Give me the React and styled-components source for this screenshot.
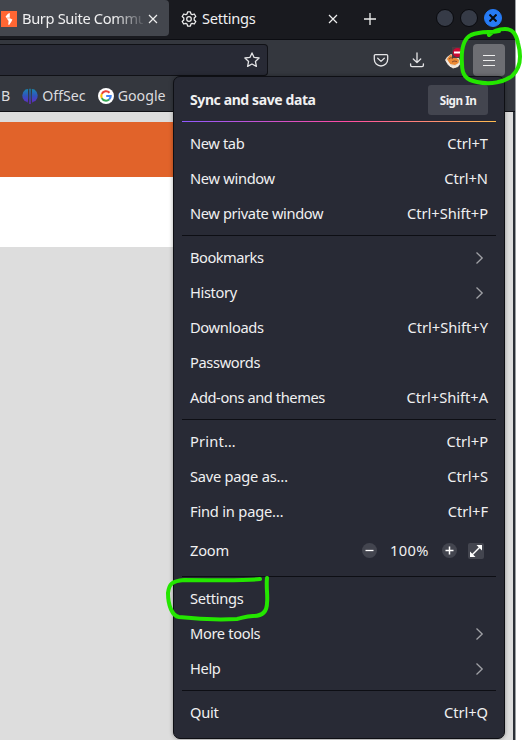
import React from "react";
import styled, { createGlobalStyle } from "styled-components";

const GlobalStyle = createGlobalStyle`
  * { box-sizing: border-box; }
  body { margin: 0; background: #fff; overflow: hidden; }
`;

const Screen = styled.div`
  position: relative;
  width: 525px;
  height: 740px;
  overflow: hidden;
  background: #fff;
  font: 14.2px/20px "Noto Sans", sans-serif;
  color: #f0f0f1;
`;
const Window = styled.div`
  width: 516px;
  height: 740px;
  display: flex;
  flex-direction: column;
  background: #ddd;
  border-right: 1px solid #9b9fa2;
  box-shadow: inset -2px 0 #2b3037;
`;
const TabStrip = styled.div`
  height: 40px;
  flex: none;
  display: flex;
  align-items: flex-start;
  background: #191a1f;
  border-bottom: 1px solid #0c0d12;
`;
const Tab = styled.div`
  height: 36px;
  width: ${(p) => p.$width}px;
  padding: 1px ${(p) => p.$right}px 0 ${(p) => p.$left}px;
  display: flex;
  align-items: center;
  gap: ${(p) => p.$gap}px;
  border-radius: 0 4px 4px 0;
  background: ${(p) => (p.$active ? "#43464d" : "transparent")};
  svg { flex: none; }
`;
const TabTitle = styled.span`
  flex: 1;
  min-width: 0;
  padding-bottom: 2px;
  white-space: nowrap;
  font-size: 14.67px;
  letter-spacing: ${(p) => p.$spacing || 0}px;
  mask-image: ${(p) => (p.$fade ? "linear-gradient(90deg, #000 76%, transparent 103%)" : "none")};
`;
const NewTab = styled.div`
  width: 62px;
  height: 37px;
  margin-left: 16px;
  display: flex;
  align-items: center;
`;
const WindowControls = styled.div`
  height: 36px;
  display: flex;
  align-items: center;
  gap: 6px;
  margin-left: 10px;
`;
const Control = styled.div`
  width: 18px;
  height: 18px;
  border-radius: 50%;
  display: grid;
  place-items: center;
  background: ${(p) => (p.$close ? "#267bf5" : "#363b47")};
  border: 1px solid ${(p) => (p.$close ? "#267bf5" : "#090a0e")};
`;
const NavBar = styled.div`
  height: 36px;
  flex: none;
  display: flex;
  align-items: center;
  padding-top: 4px;
  background: #34373e;
`;
const AddressBar = styled.div`
  width: 268px;
  height: 32px;
  display: flex;
  align-items: center;
  justify-content: flex-end;
  padding-right: 7px;
  background: #282a35;
  border: 1px solid #101116;
  border-left: 0;
  border-radius: 0 4px 4px 0;
`;
const Tools = styled.div`
  display: flex;
  align-items: center;
  margin-left: 105px;
  gap: 20px;
`;
const MenuButton = styled.div`
  width: 32px;
  height: 32px;
  margin-left: 10px;
  border-radius: 4px;
  display: grid;
  place-items: center;
  background: #6d6e73;
`;
const BookmarksBar = styled.div`
  height: 36px;
  flex: none;
  display: flex;
  align-items: center;
  padding: 4px 0 0 1px;
  background: #34373e;
  border-bottom: 1px solid #101116;
  color: #dcdcdf;
`;
const Bookmark = styled.div`
  display: flex;
  align-items: center;
  gap: 4px;
  margin-right: ${(p) => p.$after}px;
`;
const PageTop = styled.div` height: 10px; flex: none; `;
const Banner = styled.div`
  height: 55px;
  flex: none;
  margin-right: 14px;
  background: #e1632a;
`;
const Content = styled.div`
  height: 70px;
  flex: none;
  margin-right: 14px;
  background: #fff;
`;

const Menu = styled.div`
  position: absolute;
  left: 173px;
  top: 76px;
  width: 332px;
  height: 663px;
  padding: 0 8px 8px;
  display: flex;
  flex-direction: column;
  background: #282a35;
  border: 1px solid #0e0f14;
  border-radius: 7px;
  box-shadow: 0 0 4px rgba(0, 0, 0, 0.35);
  font-size: 14.67px;
`;
const MenuHeader = styled.div`
  height: 44px;
  display: flex;
  align-items: center;
  justify-content: space-between;
  padding: 2px 8px 0;
  font-weight: 700;
  font-size: 14px;
`;
const SignIn = styled.div`
  width: 60px;
  height: 30px;
  border-radius: 3px;
  display: grid;
  place-items: center;
  background: #43454f;
  font-size: 11.7px;
  letter-spacing: -0.5px;
`;
const Rainbow = styled.div`
  height: 1px;
  margin-bottom: 4px;
  background: linear-gradient(90deg, #9059ff, #ff4aa2 52%, #ffbd4f);
`;
const Divider = styled.div`
  height: 1px;
  margin: 4px 0;
  background: #0d0e14;
`;
const Item = styled.div`
  height: ${(p) => (p.$tall ? 43 : 35)}px;
  display: flex;
  align-items: center;
  justify-content: space-between;
  padding: 0 8px;
  svg { display: block; }
`;
const Label = styled.span`
  white-space: nowrap;
  letter-spacing: ${(p) => p.$spacing || 0}px;
`;
const ItemLabel = styled(Label)`
  padding-bottom: 2px;
`;
const ChevronSlot = styled.span` padding-right: 4px; `;
const ZoomControls = styled.div`
  display: flex;
  align-items: center;
  padding-right: 4px;
`;
const Round = styled.span`
  width: ${(p) => (p.$square ? 16 : 15)}px;
  height: ${(p) => (p.$square ? 16 : 15)}px;
  border-radius: ${(p) => (p.$square ? "2px" : "50%")};
  background: #43454f;
  display: grid;
  place-items: center;
`;
const Percent = styled.span`
  width: 39px;
  margin: 0 13px;
  padding-bottom: 2px;
  white-space: nowrap;
  letter-spacing: 0.35px;
`;
const FullscreenSlot = styled.span` margin-left: 11px; `;
const Ink = styled.svg`
  position: absolute;
  inset: 0;
  pointer-events: none;
`;

const Close = () => (
  <svg width="10" height="10" viewBox="0 0 10 10" stroke="#eee" strokeWidth="1.2"><path d="M1 1l8 8M9 1L1 9" /></svg>
);
const Chevron = () => (
  <ChevronSlot>
    <svg width="9" height="14" viewBox="0 0 9 14" fill="none" stroke="#a0a1a6" strokeWidth="1.3"><path d="M1.500 1.500L7.200 7l-5.700 5.500" /></svg>
  </ChevronSlot>
);
const BurpIcon = () => (
  <svg width="16" height="16" viewBox="0 0 16 16">
    <path fill="#ff6633" d="M0 0h16v16H0z" />
    <path fill="#fff" d="M8.800 2v4.700H5.200L4.600 5.600 7 2.800zM5.600 7.200h3.200l2.600 1.200-.8 1.800-2.200 3.600H7.200l.4-3.800z" />
  </svg>
);
const Gear = () => (
  <svg width="16" height="16" viewBox="0 0 16 16" fill="none" stroke="#eee" strokeWidth="1.25" strokeLinejoin="round">
    <path d="M6.600.8h2.800l.5 2.100 1.300.8 2.100-.7 1.500 2.500-1.600 1.500v2l1.600 1.500-1.500 2.500-2.100-.7-1.300.8-.5 2.100H6.600l-.5-2.100-1.300-.8-2.100.7-1.500-2.500L2.800 9V7L1.200 5.500 2.700 3l2.100.7 1.300-.8z" />
    <circle cx="8" cy="8" r="2.300" />
  </svg>
);
const Star = () => (
  <svg width="16" height="16" viewBox="0 0 16 16" fill="none" stroke="#e5e5e7" strokeWidth="1.3" strokeLinejoin="round">
    <path d="M8 .9l2.100 4.500 5 .6-3.700 3.400 1 5L8 12l-4.400 2.400 1-5L.9 6l5-.6z" />
  </svg>
);
const Pocket = () => (
  <svg width="16" height="16" viewBox="0 0 16 16" fill="none" stroke="#e5e5e7" strokeWidth="1.3" strokeLinecap="round" strokeLinejoin="round">
    <path d="M2.500 2.600h11c.8 0 1.200.5 1.200 1.200v3.500a6.700 6.700 0 0 1-13.400 0V3.800c0-.7.4-1.200 1.200-1.200z" />
    <path d="M4.700 6.300L8 9.400l3.300-3.100" />
  </svg>
);
const Download = () => (
  <svg width="16" height="16" viewBox="0 0 16 16" fill="none" stroke="#e5e5e7" strokeWidth="1.3" strokeLinecap="round" strokeLinejoin="round">
    <path d="M8 1v9.500M4.300 7L8 10.600 11.700 7M1.600 11.800v1.400c0 .9.500 1.400 1.400 1.400h10c.9 0 1.400-.5 1.400-1.400v-1.400" />
  </svg>
);
const Extension = () => (
  <svg width="18" height="26" viewBox="0 0 18 26">
    <path fill="#e8dccf" d="M0 13l2-3 4-3 8 4 2 5-3 4-5 1.500L3 18z" />
    <path fill="#ec8a35" d="M2 12l3-4 4 1 5 4-.5 3-3.500 2-5-1z" />
    <path fill="none" stroke="#7d4429" strokeWidth=".9" d="M4 12l2-1.500 2 1.500M7 15l2-1 3 .5" />
    <path fill="none" stroke="#f4eee8" strokeWidth="1.200" d="M1.500 14l2.500 2.500 1.500 3 5 .5 3.500-3" />
    <rect x="7" y="0" width="11" height="11" fill="#4b3b42" />
    <circle cx="12.500" cy="5.500" r="4.600" fill="#cc0733" />
    <path fill="#fff" d="M9 4.500h8v2H9z" />
  </svg>
);
const OffSecIcon = () => (
  <svg width="16" height="16" viewBox="0 0 16 16">
    <defs>
      <linearGradient id="offsec" x1="0" y1="0" x2="0" y2="16" gradientUnits="userSpaceOnUse">
        <stop stopColor="#168dad" /><stop offset=".5" stopColor="#3152bd" /><stop offset="1" stopColor="#6d25c8" />
      </linearGradient>
    </defs>
    <path fill="url(#offsec)" d="M6.200 1C5.500 4 7 9 5.600 14.800L4.300 13.500 2.600 13Q0 10.500.3 7.300.8 3.600 3.500 1.600zM7.300.8h1.400V16H7.300zM9.800 1l2.700.6q2.700 2 3.200 5.700.3 3.200-2.300 5.700l-1.700.5-1.300 1.300C9 9 10.500 4 9.800 1z" />
  </svg>
);
const GoogleIcon = () => (
  <svg width="16" height="16" viewBox="0 0 16 16" fill="none" strokeWidth="2.100">
    <circle cx="8" cy="8" r="8" fill="#fff" />
    <path stroke="#ea4335" d="M3.800 5.900A4.700 4.700 0 0 1 11.500 4.700" />
    <path stroke="#fbbc05" d="M3.800 10.100A4.700 4.700 0 0 1 3.800 5.900" />
    <path stroke="#34a853" d="M11.100 11.500A4.700 4.700 0 0 1 3.800 10.100" />
    <path stroke="#4285f4" d="M8.200 8h4.500q0 2.200-1.600 3.500" />
  </svg>
);

/* Each row: label, label tracking, shortcut (omitted for submenus) */
const sections = [
  [["New tab", -0.38, "Ctrl+T"], ["New window", -0.31, "Ctrl+N"], ["New private window", -0.37, "Ctrl+Shift+P"]],
  [["Bookmarks", -0.5], ["History", -0.35], ["Downloads", -0.35, "Ctrl+Shift+Y"], ["Passwords", -0.36, ""], ["Add-ons and themes", -0.43, "Ctrl+Shift+A"]],
  [["Print…", 0.2, "Ctrl+P"], ["Save page as…", -0.24, "Ctrl+S"], ["Find in page…", -0.2, "Ctrl+F"], ["Zoom", -0.2, "zoom"]],
  [["Settings", -0.3, ""], ["More tools", -0.36], ["Help", -0.35]],
  [["Quit", -0.25, "Ctrl+Q"]],
];

function ZoomRow() {
  return (
    <ZoomControls>
      <Round><svg width="9" height="9" stroke="#fff" strokeWidth="1.3"><path d="M.5 4.500h8" /></svg></Round>
      <Percent>100%</Percent>
      <Round><svg width="9" height="9" stroke="#fff" strokeWidth="1.5"><path d="M.5 4.500h8M4.500.5v8" /></svg></Round>
      <FullscreenSlot>
        <Round $square>
          <svg width="12" height="12" viewBox="0 0 12 12" stroke="#fff" strokeWidth="1.5" fill="#fff"><path d="M2 10L10 2" /><path stroke="none" d="M6.500 0H12v5.500zM0 6.500V12h5.500z" /></svg>
        </Round>
      </FullscreenSlot>
    </ZoomControls>
  );
}

function MenuRow({ label, spacing, shortcut }) {
  return (
    <Item $tall={shortcut === "zoom"}>
      <ItemLabel $spacing={spacing}>{label}</ItemLabel>
      {shortcut === undefined ? <Chevron /> : shortcut === "zoom" ? <ZoomRow /> : <ItemLabel $spacing={-0.02}>{shortcut}</ItemLabel>}
    </Item>
  );
}

export default function App() {
  return (
    <Screen>
      <GlobalStyle />
      <Window>
        <TabStrip>
          <Tab $active $width={169} $left={1} $right={11} $gap={5}>
            <BurpIcon /><TabTitle $fade $spacing={-0.36}>Burp Suite Commu</TabTitle><Close />
          </Tab>
          <Tab $width={179} $left={12} $right={10} $gap={5}>
            <Gear /><TabTitle $spacing={-0.28}>Settings</TabTitle><Close />
          </Tab>
          <NewTab><svg width="12" height="12" stroke="#eee" strokeWidth="1.3"><path d="M0 6h12M6 0v12" /></svg></NewTab>
          <WindowControls>
            <Control /><Control />
            <Control $close><svg width="8" height="8" stroke="#090b11" strokeWidth="2"><path d="M.5.5l7 7M7.500.5l-7 7" /></svg></Control>
          </WindowControls>
        </TabStrip>
        <NavBar>
          <AddressBar><Star /></AddressBar>
          <Tools><Pocket /><Download /><Extension /></Tools>
          <MenuButton><svg width="12" height="11" stroke="#eee" strokeWidth="1"><path d="M0 .5h12M0 5.500h12M0 10.500h12" /></svg></MenuButton>
        </NavBar>
        <BookmarksBar>
          <Bookmark $after={12}>B</Bookmark>
          <Bookmark $after={12}><OffSecIcon />OffSec</Bookmark>
          <Bookmark $after={0}><GoogleIcon />Google</Bookmark>
        </BookmarksBar>
        <PageTop /><Banner /><Content />
      </Window>
      <Menu>
        <MenuHeader><Label $spacing={-0.4}>Sync and save data</Label><SignIn>Sign In</SignIn></MenuHeader>
        <Rainbow />
        {sections.map((rows, i) => (
          <React.Fragment key={i}>
            {i > 0 && <Divider />}
            {rows.map(([label, spacing, shortcut]) => (
              <MenuRow key={label} label={label} spacing={spacing} shortcut={shortcut} />
            ))}
          </React.Fragment>
        ))}
      </Menu>
      <Ink width="525" height="740" fill="none" stroke="#24e600" strokeWidth="4" strokeLinecap="round" strokeLinejoin="round">
        <path d="M489 35C493 31 499 29 505 29C513 29 516 34 518 43C521 54 522 67 512 76C504 82 491 85 477 82C466 80 462 75 462 64C461 50 463 39 471 35C482 31 489 33 499 31" />
        <path d="M260 579C246 581 215 580 184 580C172 581 169 584 168 593C168 605 172 616 179 617C197 619 216 620 237 619C243 618 245 616 253 616C263 616 267 611 267 603C268 596 266 588 267 578" />
      </Ink>
    </Screen>
  );
}
